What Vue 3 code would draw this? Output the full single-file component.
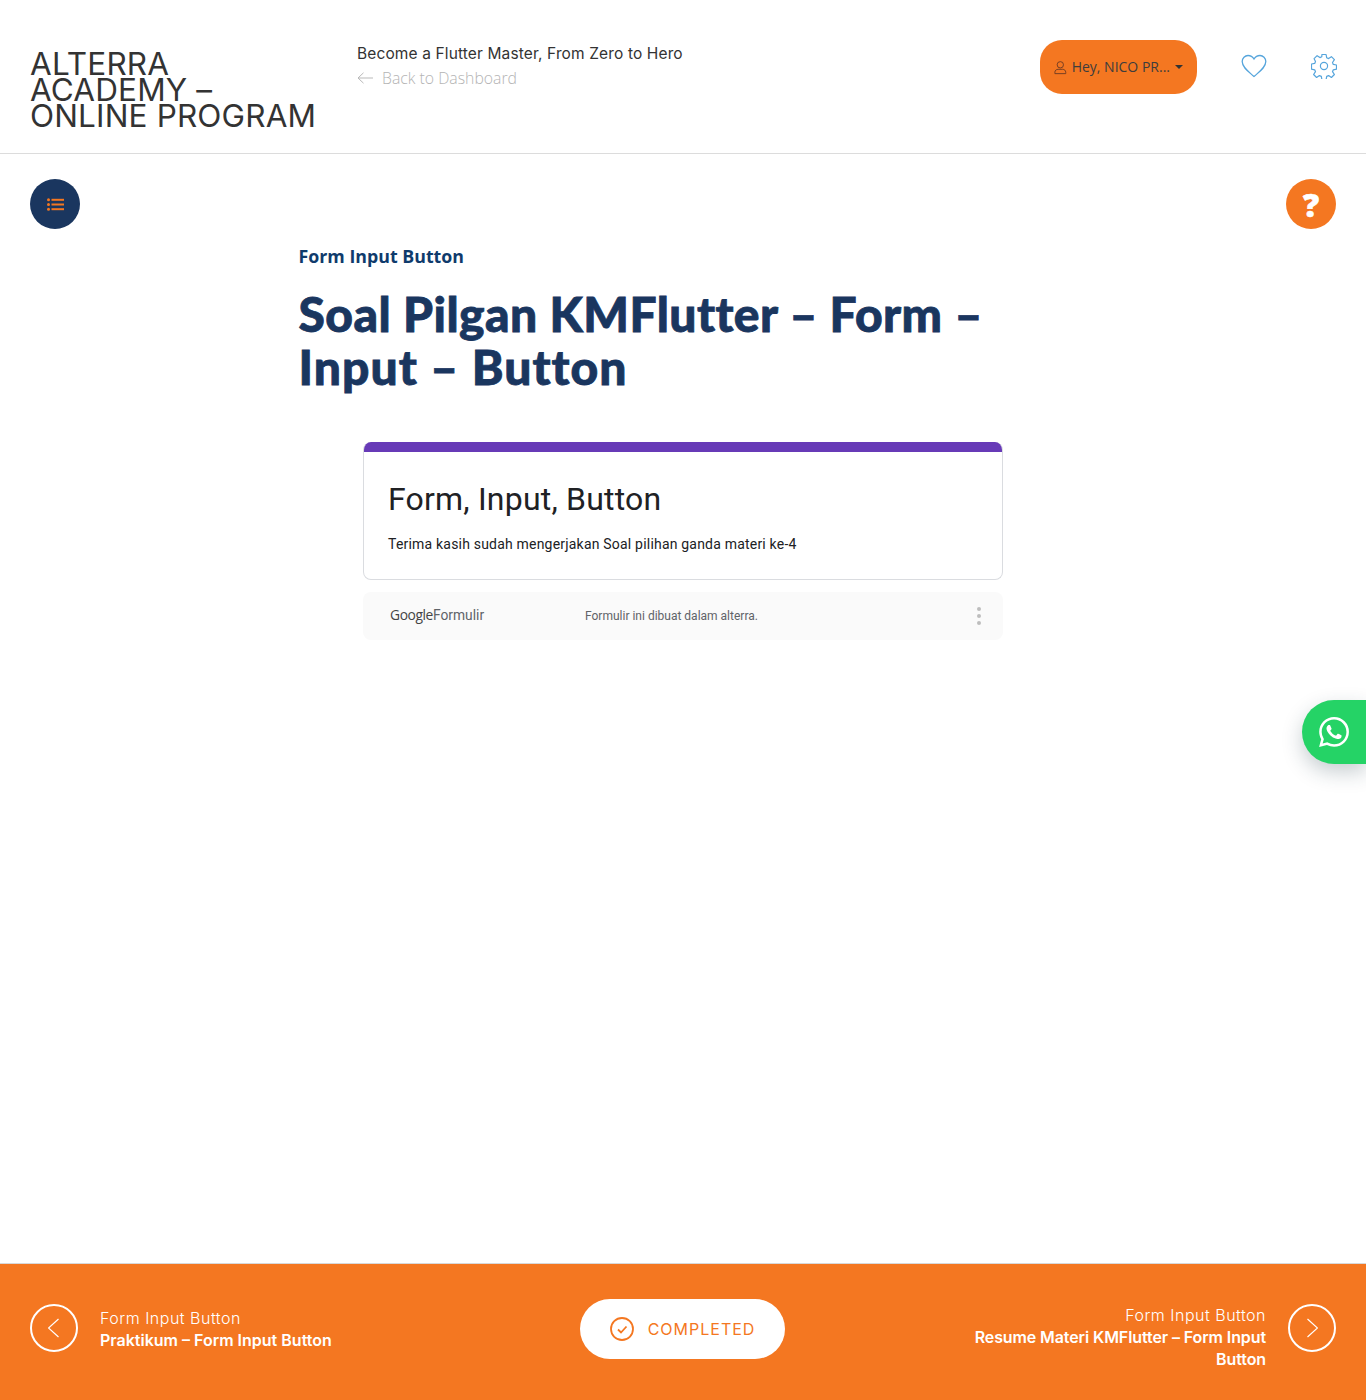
<script setup>
const footerPrev = { top: 'Form Input Button', bottom: 'Praktikum – Form Input Button' }
const footerNext = { top: 'Form Input Button', bottom: 'Resume Materi KMFlutter – Form Input Button' }
</script>

<template>
  <div class="page">
    <header class="top">
      <div class="brand">ALTERRA<br />ACADEMY –<br />ONLINE PROGRAM</div>
      <div class="course">
        <div class="course-name">Become a Flutter Master, From Zero to Hero</div>
        <a class="back">
          <svg width="17" height="12" viewBox="0 0 17 12" fill="none" stroke="#b9b9b9" stroke-width="1"><path d="M16 6H1M6.500.8 1 6l5.500 5.200" /></svg>
          <span>Back to Dashboard</span>
        </a>
      </div>
      <div class="actions">
        <button class="user">
          <svg width="14" height="15" viewBox="0 0 14 15" fill="none" stroke="#6b3a22" stroke-width="1"><circle cx="7" cy="4.500" r="3.500" /><path d="M1 14.300v-1.500c0-2 1.500-3.300 3.500-3.300h5c2 0 3.500 1.300 3.500 3.300v1.500z" /></svg>
          <span class="user-name">Hey, NICO PR...</span>
          <i class="caret"></i>
        </button>
        <svg class="heart" width="26" height="24" viewBox="0 0 26 24" fill="none" stroke="#56a5dc" stroke-width="1.300"><path d="M13 22.500C8 18 1.200 13.500 1.200 7.600 1.200 4 4 1.500 7 1.500c2.500 0 4.700 1.300 6 3.500 1.300-2.200 3.500-3.500 6-3.500 3 0 5.800 2.500 5.800 6.100C24.800 13.500 18 18 13 22.500z" /></svg>
        <svg class="gear" width="26" height="26" viewBox="0 0 26 26" fill="none" stroke="#56a5dc" stroke-width="1.200"><circle cx="13" cy="13" r="3.600" /><path d="M10.900 1.500h4.200l.6 3.300 1.900.8 2.800-1.900 3 3-1.900 2.800.8 1.900 3.200.6v4.200l-3.200.6-.8 1.900 1.900 2.800-3 3-2.800-1.900-1.900.8-.6 3.200h-4.200l-.6-3.200-1.900-.8-2.800 1.900-3-3 1.900-2.800-.8-1.900-3.200-.6V11l3.200-.6.800-1.900L3.100 5.700l3-3 2.800 1.900 1.900-.8z" stroke-linejoin="round" /></svg>
      </div>
    </header>

    <main class="main">
      <div class="tools">
        <button class="round navy">
          <svg width="17" height="13" viewBox="0 0 17 13" fill="#f47721"><circle cx="1.500" cy="1.800" r="1.500" /><circle cx="1.500" cy="6.500" r="1.500" /><circle cx="1.500" cy="11.200" r="1.500" /><rect x="4.500" y=".8" width="12.500" height="2" /><rect x="4.500" y="5.500" width="12.500" height="2" /><rect x="4.500" y="10.200" width="12.500" height="2" /></svg>
        </button>
        <button class="round orange">?</button>
      </div>

      <section class="lesson">
        <div class="kicker">Form Input Button</div>
        <h1>Soal Pilgan KMFlutter – Form –<br /><span class="second">Input – Button</span></h1>
        <div class="form-wrap">
          <div class="form-card">
            <div class="form-bar"></div>
            <div class="form-body">
              <h2>Form, Input, Button</h2>
              <p>Terima kasih sudah mengerjakan Soal pilihan ganda materi ke-4</p>
            </div>
          </div>
          <div class="form-foot">
            <div class="g-brand"><span class="g">Google</span><span class="f">Formulir</span></div>
            <div class="g-note">Formulir ini dibuat dalam alterra.</div>
            <div class="dots"><i></i><i></i><i></i></div>
          </div>
        </div>
      </section>
    </main>

    <a class="wa" aria-label="WhatsApp">
      <svg width="30" height="30" viewBox="0 0 24 24" fill="#fff"><path d="M17.472 14.382c-.297-.149-1.758-.867-2.030-.967-.273-.099-.471-.148-.670.150-.197.297-.767.966-.940 1.164-.173.199-.347.223-.644.075-.297-.150-1.255-.463-2.390-1.475-.883-.788-1.480-1.761-1.653-2.059-.173-.297-.018-.458.130-.606.134-.133.298-.347.446-.520.149-.174.198-.298.298-.497.099-.198.050-.371-.025-.520-.075-.149-.669-1.612-.916-2.207-.242-.579-.487-.500-.669-.510-.173-.008-.371-.010-.570-.010-.198 0-.520.074-.792.372-.272.297-1.040 1.016-1.040 2.479 0 1.462 1.065 2.875 1.213 3.074.149.198 2.096 3.200 5.077 4.487.709.306 1.262.489 1.694.625.712.227 1.360.195 1.871.118.571-.085 1.758-.719 2.006-1.413.248-.694.248-1.289.173-1.413-.074-.124-.272-.198-.570-.347m-5.421 7.403h-.004a9.870 9.870 0 0 1-5.031-1.378l-.361-.214-3.741.982.998-3.648-.235-.374a9.860 9.860 0 0 1-1.510-5.260c.001-5.450 4.436-9.884 9.888-9.884 2.640 0 5.122 1.030 6.988 2.898a9.825 9.825 0 0 1 2.893 6.994c-.003 5.450-4.437 9.884-9.885 9.884m8.413-18.297A11.815 11.815 0 0 0 12.050 0C5.495 0 .160 5.335.157 11.892c0 2.096.547 4.142 1.588 5.945L.057 24l6.305-1.654a11.882 11.882 0 0 0 5.683 1.448h.005c6.554 0 11.890-5.335 11.893-11.893a11.821 11.821 0 0 0-3.480-8.413z" /></svg>
    </a>

    <footer class="bottom">
      <div class="nav-side">
        <span class="circle">
          <svg width="12" height="20" viewBox="0 0 12 20" fill="none" stroke="#fff" stroke-width="1.200"><path d="M10.500 1 .5 10l10 9" /></svg>
        </span>
        <div class="nav-text">
          <div class="nav-top">{{ footerPrev.top }}</div>
          <div class="nav-bottom">{{ footerPrev.bottom }}</div>
        </div>
      </div>
      <button class="done">
        <svg width="24" height="24" viewBox="0 0 24 24" fill="none" stroke="#f47721" stroke-width="1.800"><circle cx="12" cy="12" r="11" /><path d="M8 12.500l3 3 5.500-6" /></svg>
        <span>COMPLETED</span>
      </button>
      <div class="nav-side right">
        <div class="nav-text">
          <div class="nav-top">{{ footerNext.top }}</div>
          <div class="nav-bottom">{{ footerNext.bottom }}</div>
        </div>
        <span class="circle">
          <svg width="12" height="20" viewBox="0 0 12 20" fill="none" stroke="#fff" stroke-width="1.200"><path d="M1.500 1l10 9-10 9" /></svg>
        </span>
      </div>
    </footer>
  </div>
</template>

<style scoped>
.page {
  position: relative;
  height: 1400px;
  display: flex;
  flex-direction: column;
  background: #fff;
  overflow: hidden;
  font-family: "Inter", "Open Sans", sans-serif;
}
.top {
  height: 154px;
  box-sizing: border-box;
  border-bottom: 1px solid #dcdcdc;
  display: flex;
  padding: 0 30px;
  flex: none;
}
.brand {
  width: 327px;
  flex: none;
  padding-top: 51px;
  font-size: 31.500px;
  line-height: 26px;
  letter-spacing: .15px;
  color: #333;
  white-space: nowrap;
}
.course { padding-top: 44px; flex: 1; }
.course-name {
  font-size: 15.500px;
  line-height: 20px;
  color: #333;
  letter-spacing: 0.130px;
}
.back {
  margin-top: 4px;
  display: flex;
  align-items: center;
  gap: 8px;
  font-family: "Open Sans", sans-serif;
  font-size: 15.800px;
  line-height: 20px;
  font-weight: 300;
  color: #b4b4b4;
}
.actions {
  display: flex;
  align-items: flex-start;
  padding-top: 40px;
  margin-right: -1px;
}
.user {
  width: 157px;
  height: 54px;
  flex: none;
  border: 0;
  border-radius: 22px;
  background: #f47721;
  display: flex;
  align-items: center;
  padding: 0 14px;
  font-family: "Open Sans", sans-serif;
  font-size: 14px;
  color: #3d3d3d;
  white-space: nowrap;
}
.user-name { margin: 0 5px 2px 5px; }
.caret {
  border-top: 4px solid #333;
  border-left: 4px solid transparent;
  border-right: 4px solid transparent;
}
.heart { margin: 14px 0 0 44px; }
.gear { margin: 13px 0 0 44px; }
.main { flex: 1; min-height: 0; }
.tools {
  display: flex;
  justify-content: space-between;
  padding: 25px 30px 0;
}
.round {
  width: 50px;
  height: 50px;
  border: 0;
  border-radius: 50%;
  padding: 0;
  display: flex;
  align-items: center;
  justify-content: center;
}
.navy { background: #1a365f; }
.orange {
  background: #f47721;
  color: #fff;
  font-family: "Open Sans", sans-serif;
  font-weight: 800;
  font-size: 32px;
  -webkit-text-stroke: 0.600px #fff;
}
.lesson { width: 704px; margin: 15px 0 0 298.500px; }
.kicker {
  font-family: "Open Sans", sans-serif;
  font-weight: 700;
  font-size: 17.800px;
  line-height: 24px;
  color: #0f3b6c;
}
h1 {
  margin: 19px 0 0;
  font-family: "Lato", sans-serif;
  font-weight: 900;
  font-size: 48px;
  line-height: 53px;
  letter-spacing: 0.440px;
  -webkit-text-stroke: 0.800px #1a365f;
  color: #1a365f;
}
.second { letter-spacing: 1.050px; }
.form-wrap { margin: 49px 0 0 64.500px; width: 640px; }
.form-card {
  border: 1px solid #dadce0;
  border-top: 0;
  border-radius: 8px;
  overflow: hidden;
  height: 138px;
  box-sizing: border-box;
}
.form-bar { height: 10px; margin: 0 -1px; background: #673ab7; }
.form-body { padding: 28px 24px 0; font-family: Roboto, sans-serif; color: #202124; }
h2 { margin: 0; font-size: 32px; line-height: 38px; font-weight: 400; letter-spacing: .2px; }
p { margin: 16px 0 0; font-size: 14px; line-height: 20px; letter-spacing: .2px; }
.form-foot {
  margin-top: 12px;
  height: 48px;
  background: #fafafa;
  border-radius: 8px;
  display: flex;
  align-items: center;
  font-family: Roboto, sans-serif;
  color: #5f6368;
  padding: 0 22px 0 27px;
}
.g-brand { width: 195px; font-size: 13.800px; margin-bottom: 3px; }
.g { font-family: "Open Sans", sans-serif; letter-spacing: -0.400px; color: #444; }
.g-note { flex: 1; font-size: 12px; }
.dots { display: flex; flex-direction: column; gap: 3px; }
.dots i { width: 4px; height: 4px; border-radius: 50%; background: #bdbdbd; }
.wa {
  position: absolute;
  right: 0;
  top: 700px;
  width: 64px;
  height: 64px;
  border-radius: 32px 0 0 32px;
  background: #25d366;
  box-shadow: 0 8px 20px rgba(30, 60, 70, .25);
  display: flex;
  align-items: center;
  justify-content: center;
}
.bottom {
  height: 137px;
  flex: none;
  box-sizing: border-box;
  border-top: 1px solid #d8d8d8;
  background: #f47721;
  display: grid;
  grid-template-columns: 1fr auto 1fr;
  align-items: center;
  padding: 0 30px 8px;
  color: #fff;
}
.nav-side { display: flex; align-items: center; gap: 22px; }
.nav-text { margin-top: 2px; }
.nav-side.right { justify-content: flex-end; text-align: right; }
.nav-side.right .nav-text { width: 296px; margin-top: 18px; }
.nav-side.right .nav-bottom { letter-spacing: -0.100px; }
.circle {
  width: 48px;
  height: 48px;
  flex: none;
  box-sizing: border-box;
  border: 2px solid #fff;
  border-radius: 50%;
  display: flex;
  align-items: center;
  justify-content: center;
}
.nav-top { font-size: 16px; line-height: 22px; font-weight: 300; letter-spacing: .5px; }
.nav-bottom { font-size: 16px; line-height: 22px; font-weight: 600; }
.done {
  width: 205px;
  height: 60px;
  border: 0;
  border-radius: 30px;
  background: #fff;
  margin: 2px 0 0 -1px;
  display: flex;
  align-items: center;
  justify-content: center;
  gap: 14px;
  font-family: "Inter", sans-serif;
  font-size: 16px;
  letter-spacing: 1px;
  color: #f47721;
}
</style>
